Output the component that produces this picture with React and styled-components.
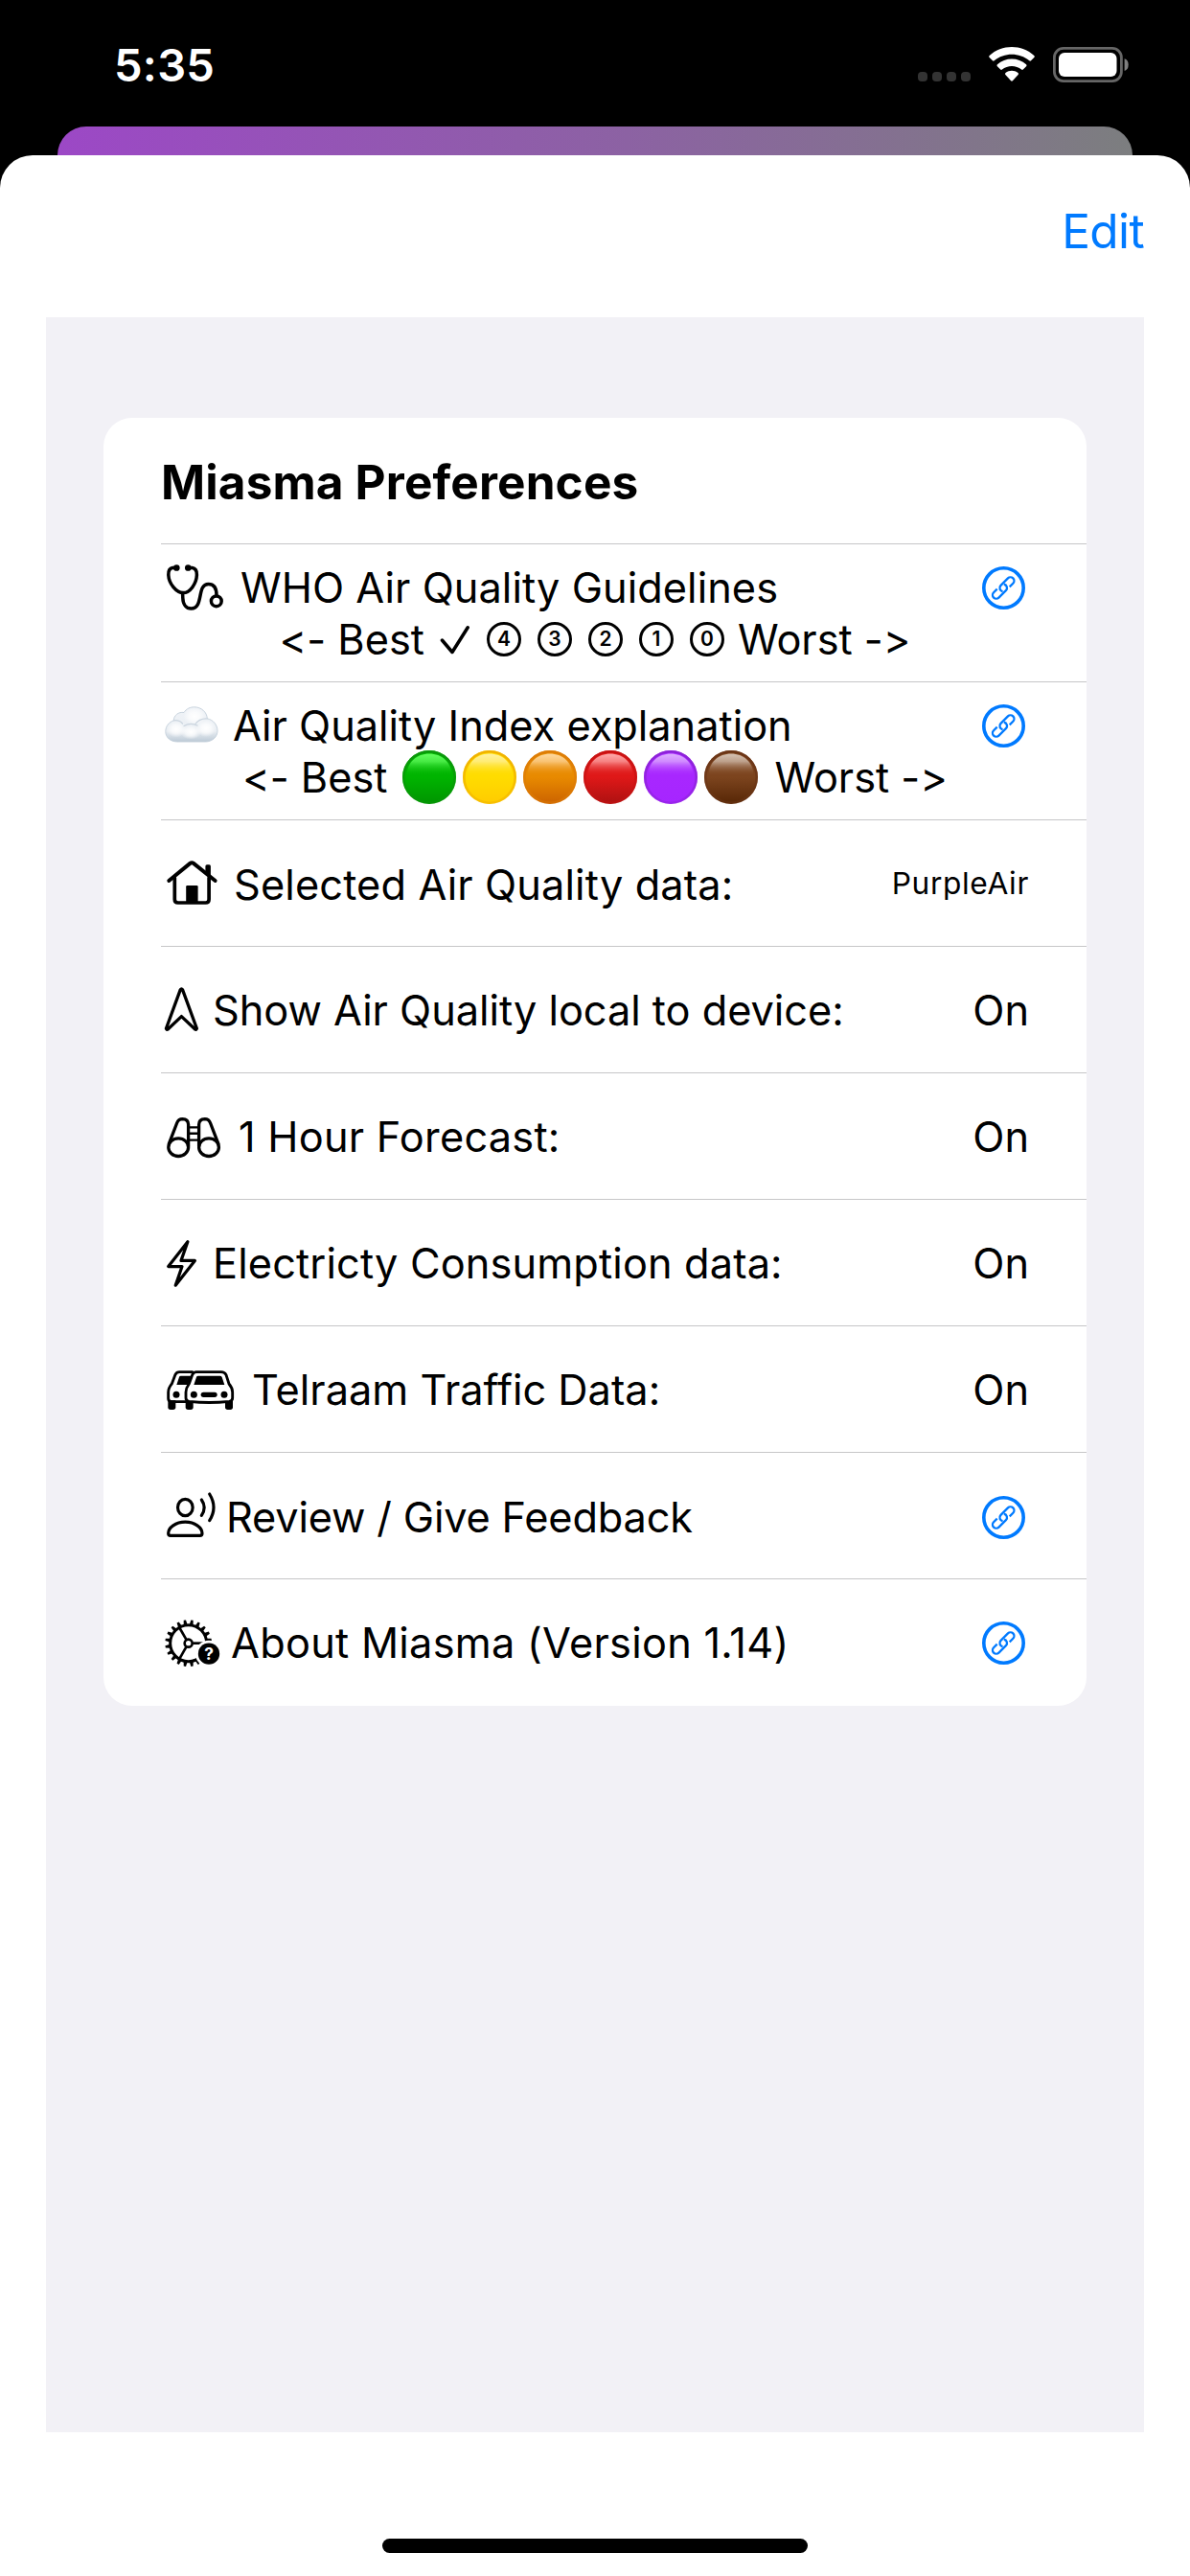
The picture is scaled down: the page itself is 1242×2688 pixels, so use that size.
import React from "react";
import styled, { createGlobalStyle } from "styled-components";

const GlobalStyle = createGlobalStyle`
  body {
    margin: 0;
    background: #000;
  }
`;

const Screen = styled.div`
  display: flex;
  flex-direction: column;
  width: 1242px;
  height: 2688px;
  background: #000;
  color: #000;
  font-family: Inter, "Liberation Sans", sans-serif;
  font-feature-settings: "calt" 0;
`;

const StatusBar = styled.header`
  box-sizing: border-box;
  display: flex;
  align-items: flex-start;
  justify-content: space-between;
  height: 132px;
  padding: 49px 64px 0 119px;
  color: #fff;
`;

const Clock = styled.time`
  font-size: 47px;
  font-weight: 600;
  line-height: 38px;
  letter-spacing: 0.3px;
`;

const StatusIcons = styled.div`
  display: flex;
  align-items: flex-start;
`;

const SignalDots = styled.div`
  display: flex;
  gap: 5px;
  padding: 26px 19px 0 0;
`;

const SignalDot = styled.span`
  width: 10px;
  height: 10px;
  border-radius: 4px;
  background: #333;
`;

const Wifi = styled.svg`
  display: block;
  width: 48px;
  height: 37px;
  margin-right: 19px;
`;

const Battery = styled.svg`
  display: block;
  width: 79px;
  height: 37px;
`;

const BackCard = styled.div`
  height: 30px;
  margin: 0 60px;
  border-radius: 30px 30px 0 0;
  background: linear-gradient(90deg, #9c48c6 0%, #8c62a3 53%, #7c7e7f 100%);
`;

const Sheet = styled.main`
  display: flex;
  flex: 1;
  flex-direction: column;
  border-radius: 34px 34px 0 0;
  background: #fff;
`;

const Toolbar = styled.div`
  box-sizing: border-box;
  display: flex;
  align-items: center;
  justify-content: flex-end;
  height: 169px;
  padding: 0 48px 11px;
`;

const EditButton = styled.button`
  padding: 0;
  border: 0;
  background: none;
  color: #007aff;
  font: inherit;
  font-size: 49.5px;
  line-height: 60px;
  letter-spacing: -0.6px;
`;

const Panel = styled.section`
  box-sizing: border-box;
  height: 2207px;
  margin: 0 48px;
  padding: 105px 60px 0;
  background: #f2f1f6;
`;

const Card = styled.ul`
  margin: 0;
  padding: 0 0 0 60px;
  border-radius: 30px;
  background: #fff;
  list-style: none;
`;

const Row = styled.li`
  box-sizing: border-box;
  height: ${(p) => p.$height || 132}px;
  padding: ${(p) => p.$top || 39}px 60px 0 0;
  border-bottom: 1px solid #c6c6c8;

  &:last-child {
    border-bottom-color: transparent;
  }
`;

const Title = styled.h1`
  margin: 0;
  font-size: 49.5px;
  font-weight: 700;
  line-height: 60px;
  letter-spacing: 0.14px;
`;

const Line = styled.div`
  display: flex;
  align-items: center;
  height: 54px;
`;

const Label = styled.span`
  flex: 1;
  font-size: 43.3px;
  line-height: 54px;
  letter-spacing: ${(p) => p.$track || 0}px;
  white-space: nowrap;
`;

const Value = styled.span`
  font-size: 43.3px;
  line-height: 54px;
`;

const SmallValue = styled.span`
  padding-bottom: 3px;
  font-size: 31.7px;
  line-height: 40px;
  letter-spacing: 0.65px;
`;

const Scale = styled.div`
  display: flex;
  align-items: center;
  justify-content: center;
  height: 54px;
  font-size: 43.3px;
  line-height: 54px;
  white-space: pre;
`;

const Levels = styled.div`
  display: flex;
  align-items: center;
  gap: ${(p) => p.$gap}px;
  padding: ${(p) => p.$pad};
`;

const Digit = styled.span`
  box-sizing: border-box;
  display: flex;
  align-items: center;
  justify-content: center;
  width: 36px;
  height: 36px;
  border: 3px solid #000;
  border-radius: 50%;
  font-size: 21px;
  font-weight: 600;
  line-height: 30px;
`;

const Glyph = styled.svg`
  flex: none;
  display: block;
  width: ${(p) => p.$width}px;
  height: 54px;
  overflow: visible;
`;

const CheckMark = styled.svg`
  display: block;
  width: 32px;
  height: 36px;
`;

const Ball = styled.svg`
  display: block;
  width: 56px;
  height: 56px;
`;

const HomeIndicator = styled.div`
  width: 444px;
  height: 15px;
  margin: 111px auto 0;
  border-radius: 8px;
  background: #000;
`;

function Stroked({ width, box, weight = 3.4, children }) {
  return (
    <Glyph
      $width={width}
      viewBox={box}
      fill="none"
      stroke="#000"
      strokeWidth={weight}
      strokeLinecap="round"
      strokeLinejoin="round"
    >
      {children}
    </Glyph>
  );
}

const Stethoscope = () => (
  <Stroked width={83} box="168 586 83 54" weight={3.5}>
    <path d="M184.5 592.6 L180 592.6 Q175.6 593.3 175.8 600 C176.2 609 184 618.6 191.2 618.6 C198.4 618.6 205 609 205.4 600 Q205.6 593.3 200.6 592.6 L196 592.6" />
    <path d="M190.6 619.4 L190.8 624 C191 631 194.5 635 199.5 635 C213 635 205 609.4 217.5 609.4 C224 609.4 226 614 226 621" />
    <circle cx="225.8" cy="627.3" r="5.4" />
    <circle cx="184.3" cy="592.5" r="1.6" fill="#000" />
    <circle cx="196.3" cy="592.5" r="1.6" fill="#000" />
  </Stroked>
);

const Cloud = () => (
  <Glyph $width={75} viewBox="168 730 75 54">
    <defs>
      <linearGradient id="sky" x1="0" y1="737" x2="0" y2="774" gradientUnits="userSpaceOnUse">
        <stop offset="0" stopColor="#f1f4f8" />
        <stop offset="0.7" stopColor="#e9eef3" />
        <stop offset="1" stopColor="#bcc9d5" />
      </linearGradient>
      <radialGradient id="puff">
        <stop offset="0" stopColor="#fff" />
        <stop offset="0.5" stopColor="#fff" stopOpacity="0.7" />
        <stop offset="1" stopColor="#fff" stopOpacity="0" />
      </radialGradient>
    </defs>
    <path
      d="M185 774 C178 774 172.8 769.5 172.8 763.5 C172.8 757.5 176.5 753.5 181.3 751.8 C181.3 746.5 186.5 742.5 192 743.5 C194.5 739.5 198.5 737.8 202.8 737.8 C210 737.8 216 743 216.3 749.8 C222.5 751 227 756.5 227 762.5 C227 769 221.5 774 214.5 774 Z"
      fill="url(#sky)"
      stroke="#c3cfda"
      strokeWidth="0.9"
    />
    <ellipse cx="203" cy="747.5" rx="11.5" ry="9" fill="url(#puff)" />
    <ellipse cx="184" cy="761" rx="10" ry="8.5" fill="url(#puff)" />
    <ellipse cx="215" cy="760" rx="10.5" ry="9" fill="url(#puff)" />
    <ellipse cx="199" cy="764" rx="11" ry="7.5" fill="url(#puff)" />
    <path
      d="M181.3 751.8 Q187 750.8 190.5 755 M192 757.5 Q199 753.5 206 757 M203.5 756 Q208 749.5 216.3 750"
      fill="none"
      stroke="#cbd5df"
      strokeWidth="1.2"
      strokeLinecap="round"
    />
  </Glyph>
);

const House = () => (
  <Stroked width={76} box="168 896 76 54" weight={3.7}>
    <path d="M176.3 919 L198.4 900.9 Q200.2 899.5 202 900.9 L224.6 919" strokeWidth="4" />
    <path d="M182.3 916 L182.3 938.6 Q182.3 942 185.8 942 L214.6 942 Q218.1 942 218.1 938.6 L218.1 916" />
    <rect x="194.2" y="924" width="12.4" height="18" rx="1.2" fill="#000" stroke="none" />
    <path d="M214.4 904 Q214.4 902.2 216 902.2 L218.4 902.2 Q219.9 902.2 219.9 904 L219.9 914.6 L214.4 910.2 Z" fill="#000" stroke="none" />
  </Stroked>
);

const Arrow = () => (
  <Stroked width={54} box="168 1027 54 54" weight={3.3}>
    <path d="M188.3 1032.6 Q189.4 1031 190.5 1032.6 L205.4 1073.2 Q205 1074.8 203.6 1074 L189.4 1060.6 L175.2 1074 Q173.8 1074.8 173.4 1073.2 Z" />
  </Stroked>
);

const Binoculars = () => (
  <Stroked width={81} box="168 1159 81 54" weight={3.3}>
    <ellipse cx="186.2" cy="1197.2" rx="10.4" ry="9.3" />
    <ellipse cx="218" cy="1197.2" rx="10.4" ry="9.3" />
    <path d="M176.3 1193.6 L184.6 1172 Q186.3 1167.7 190.4 1167.7 Q196.6 1167.9 196.6 1173.6 L196.6 1196" />
    <path d="M227.9 1193.6 L219.6 1172 Q217.9 1167.7 213.8 1167.7 Q207.6 1167.9 207.6 1173.6 L207.6 1196" />
    <path d="M198 1176.4 H206 M198 1182.8 H206 M198 1189.6 H206" strokeWidth="2.4" strokeLinecap="butt" />
  </Stroked>
);

const Bolt = () => (
  <Stroked width={54} box="168 1291 54 54" weight={3.2}>
    <path d="M195.9 1295.7 L175.7 1321.6 L190 1321.6 L183.2 1341.2 L203.4 1315.4 L189 1315.4 Z" />
  </Stroked>
);

const Cars = () => (
  <Stroked width={95} box="168 1423 95 54">
    <g transform="translate(150 1260) scale(0.33333)" strokeWidth="8.5">
      <path d="M152 515 L112 515 Q103 515 99 523 L88 552 Q77 566 77 578 L77 598 Q77 607 86 608 L132 608" />
      <path d="M165 515 L243 515 Q253 515 258 524 L267 552 Q278 565 278 578 L278 596 Q278 605 268 607 Q205 614 142 607 Q132 605 132 596 L132 578 Q132 565 142 552 L152 524 Q156 515 165 515 Z" />
      <g fill="#000" stroke="none">
        <path d="M116 527 L149 527 L139 555 L103 555 L111 531 Q112 527 116 527 Z" />
        <path d="M171 527 L239 527 Q243 527 245 531 L253 555 L157 555 L165 531 Q166 527 171 527 Z" />
        <circle cx="102" cy="586" r="10.5" />
        <circle cx="157" cy="586" r="10.5" />
        <circle cx="252" cy="586" r="10.5" />
        <rect x="179" y="578" width="51" height="16" rx="8" />
        <path d="M76 604 H100 V625 Q100 633 92 633 H84 Q76 633 76 625 Z" />
        <path d="M131 606 H155 V625 Q155 633 147 633 H139 Q131 633 131 625 Z" />
        <path d="M255 606 H279 V625 Q279 633 271 633 H263 Q255 633 255 625 Z" />
      </g>
    </g>
  </Stroked>
);

const Speaker = () => (
  <Stroked width={68} box="168 1556 68 54">
    <g transform="translate(150 1520) scale(0.33333)" strokeWidth="9.5">
      <ellipse cx="130" cy="159" rx="23.5" ry="26" />
      <path d="M84 247 Q77 247 77 240 C77 222 100 204.5 130 204.5 C160 204.5 183 222 183 240 Q183 247 176 247 Z" />
      <path d="M181 135 Q198 159 181 184" />
      <path d="M206 117 Q232 159 206 200" />
    </g>
  </Stroked>
);

const teeth = Array.from({ length: 20 }, (_, i) => i * 18 + 9);

const Gear = () => (
  <Glyph $width={73} viewBox="168 1687 73 54">
    <g transform="translate(150 1520) scale(0.33333)">
      <g transform="translate(140 584)" stroke="#000" fill="none" strokeWidth="9">
        <circle r="57" />
        <circle r="12" strokeWidth="8" />
        {teeth.map((a) => (
          <path key={a} d="M-6 -58 L-3.5 -73 L3.5 -73 L6 -58 Z" fill="#000" stroke="none" transform={`rotate(${a})`} />
        ))}
        {[0, 120, 240].map((a) => (
          <path key={a} d="M14 0 H56" strokeWidth="8" transform={`rotate(${a})`} />
        ))}
      </g>
      <circle cx="204" cy="617" r="42" fill="#fff" />
      <circle cx="204" cy="617" r="33.5" fill="#000" />
      <text x="204" y="636" textAnchor="middle" fontSize="52" fontWeight="700" fill="#fff">
        ?
      </text>
    </g>
  </Glyph>
);

const chain = "M-5.4 -3.8 H-10.5 A3.8 3.8 0 0 0 -10.5 3.8 H0 A3.8 3.8 0 0 0 3.1 -2.2";

const LinkIcon = () => (
  <Glyph $width={49} viewBox="0 0 49 54" fill="none" stroke="#007aff">
    <circle cx="22.5" cy="27.5" r="20.7" strokeWidth="3.6" />
    <g transform="translate(22.2 27.5) rotate(-45)" strokeWidth="2.3">
      <path d={chain} />
      <path d={chain} transform="rotate(180)" />
    </g>
  </Glyph>
);

const balls = [
  { name: "green", rim: "#0b960b", high: "#62ff5e", mid: "#00b400", low: "#009400" },
  { name: "yellow", rim: "#f0b000", high: "#fff2a2", mid: "#ffdc00", low: "#ffcb00" },
  { name: "orange", rim: "#dd7c06", high: "#ffd9a0", mid: "#e88a00", low: "#cb6200" },
  { name: "red", rim: "#c81212", high: "#ffabab", mid: "#df1818", low: "#ac1111" },
  { name: "purple", rim: "#8b22d6", high: "#dfb0ff", mid: "#a827ff", low: "#a625ff" },
  { name: "brown", rim: "#6b3516", high: "#d6c3b4", mid: "#7c441e", low: "#562605" },
];

const GlossyBall = ({ name, rim, high, mid, low }) => (
  <Ball viewBox="0 0 56 56">
    <defs>
      <linearGradient id={`body-${name}`} x1="0" y1="0" x2="0" y2="1">
        <stop offset="0.5" stopColor={mid} />
        <stop offset="1" stopColor={low} />
      </linearGradient>
      <linearGradient id={`rim-${name}`} x1="0" y1="0" x2="0" y2="1">
        <stop offset="0" stopColor={rim} />
        <stop offset="1" stopColor={rim} stopOpacity="0.45" />
      </linearGradient>
      <linearGradient id={`gloss-${name}`} x1="0" y1="0" x2="0" y2="1">
        <stop offset="0" stopColor={high} />
        <stop offset="0.35" stopColor={high} stopOpacity="0.72" />
        <stop offset="1" stopColor={mid} stopOpacity="0" />
      </linearGradient>
    </defs>
    <circle cx="28" cy="28" r="28" fill={`url(#body-${name})`} />
    <circle cx="28" cy="28" r="26.7" fill="none" stroke={`url(#rim-${name})`} strokeWidth="2.6" />
    <path d="M4.5 27 C4.5 12 15 3.5 28 3.5 C41 3.5 51.5 12 51.5 27 Z" fill={`url(#gloss-${name})`} />
  </Ball>
);

export default function App() {
  return (
    <>
      <GlobalStyle />
      <Screen>
        <StatusBar>
          <Clock>5:35</Clock>
          <StatusIcons>
            <SignalDots>
              <SignalDot />
              <SignalDot />
              <SignalDot />
              <SignalDot />
            </SignalDots>
            <Wifi viewBox="0 0 48 37" fill="#fff">
              <path d="M0.7 11 Q-0.3 10 0.7 9 C13.5 -3 34.5 -3 47.3 9 Q48.3 10 47.3 11 L44 14.3 Q43.2 15.1 42.3 14.3 C32 5.4 16 5.4 5.7 14.3 Q4.8 15.1 4 14.3 Z" />
              <path d="M8.9 20.2 Q7.9 19.2 8.9 18.2 C17.3 10.6 30.7 10.6 39.1 18.2 Q40.1 19.2 39.1 20.2 L35.8 23.5 Q35 24.3 34.1 23.5 C28.5 18.7 19.5 18.7 13.9 23.5 Q13 24.3 12.2 23.5 Z" />
              <path d="M17.4 29 Q16.4 28 17.5 27.1 C21.3 24 26.7 24 30.5 27.1 Q31.6 28 30.6 29 L24.9 35.2 Q24 36.1 23.1 35.2 Z" />
            </Wifi>
            <Battery viewBox="0 0 79 37">
              <rect x="1.4" y="1.4" width="70" height="34.2" rx="9.5" fill="none" stroke="#666" strokeWidth="2.8" />
              <rect x="6" y="6" width="60.5" height="25" rx="6" fill="#fff" />
              <path d="M74.6 12.3 Q78.7 13.5 78.7 18.5 Q78.7 23.5 74.6 25 Z" fill="#808080" />
            </Battery>
          </StatusIcons>
        </StatusBar>
        <BackCard />
        <Sheet>
          <Toolbar>
            <EditButton>Edit</EditButton>
          </Toolbar>
          <Panel>
            <Card>
              <Row $top={37}>
                <Title>Miasma Preferences</Title>
              </Row>
              <Row $height={144} $top={18}>
                <Line>
                  <Stethoscope />
                  <Label $track={0.06}>WHO Air Quality Guidelines</Label>
                  <LinkIcon />
                </Line>
                <Scale>
                  {"<- Best"}
                  <Levels $gap={17} $pad="0 14px 0 16px">
                    <CheckMark viewBox="0 0 32 36">
                      <path
                        d="M2.4 19 L13 31.5 L29.2 5.8"
                        fill="none"
                        stroke="#000"
                        strokeWidth="3.5"
                        strokeLinecap="round"
                        strokeLinejoin="round"
                      />
                    </CheckMark>
                    {[4, 3, 2, 1, 0].map((n) => (
                      <Digit key={n}>{n}</Digit>
                    ))}
                  </Levels>
                  {"Worst ->"}
                </Scale>
              </Row>
              <Row $height={144} $top={18}>
                <Line>
                  <Cloud />
                  <Label>Air Quality Index explanation</Label>
                  <LinkIcon />
                </Line>
                <Scale>
                  {"<- Best"}
                  <Levels $gap={7} $pad="0 17px 0 16px">
                    {balls.map((b) => (
                      <GlossyBall key={b.name} {...b} />
                    ))}
                  </Levels>
                  {"Worst ->"}
                </Scale>
              </Row>
              <Row $top={40}>
                <Line>
                  <House />
                  <Label $track={0.14}>Selected Air Quality data:</Label>
                  <SmallValue>PurpleAir</SmallValue>
                </Line>
              </Row>
              <Row>
                <Line>
                  <Arrow />
                  <Label $track={-0.02}>Show Air Quality local to device:</Label>
                  <Value>On</Value>
                </Line>
              </Row>
              <Row>
                <Line>
                  <Binoculars />
                  <Label $track={0.25}>1 Hour Forecast:</Label>
                  <Value>On</Value>
                </Line>
              </Row>
              <Row>
                <Line>
                  <Bolt />
                  <Label $track={0.14}>Electricty Consumption data:</Label>
                  <Value>On</Value>
                </Line>
              </Row>
              <Row>
                <Line>
                  <Cars />
                  <Label $track={0.01}>Telraam Traffic Data:</Label>
                  <Value>On</Value>
                </Line>
              </Row>
              <Row $top={40}>
                <Line>
                  <Speaker />
                  <Label $track={-0.17}>Review / Give Feedback</Label>
                  <LinkIcon />
                </Line>
              </Row>
              <Row>
                <Line>
                  <Gear />
                  <Label $track={0.27}>About Miasma (Version 1.14)</Label>
                  <LinkIcon />
                </Line>
              </Row>
            </Card>
          </Panel>
          <HomeIndicator />
        </Sheet>
      </Screen>
    </>
  );
}
